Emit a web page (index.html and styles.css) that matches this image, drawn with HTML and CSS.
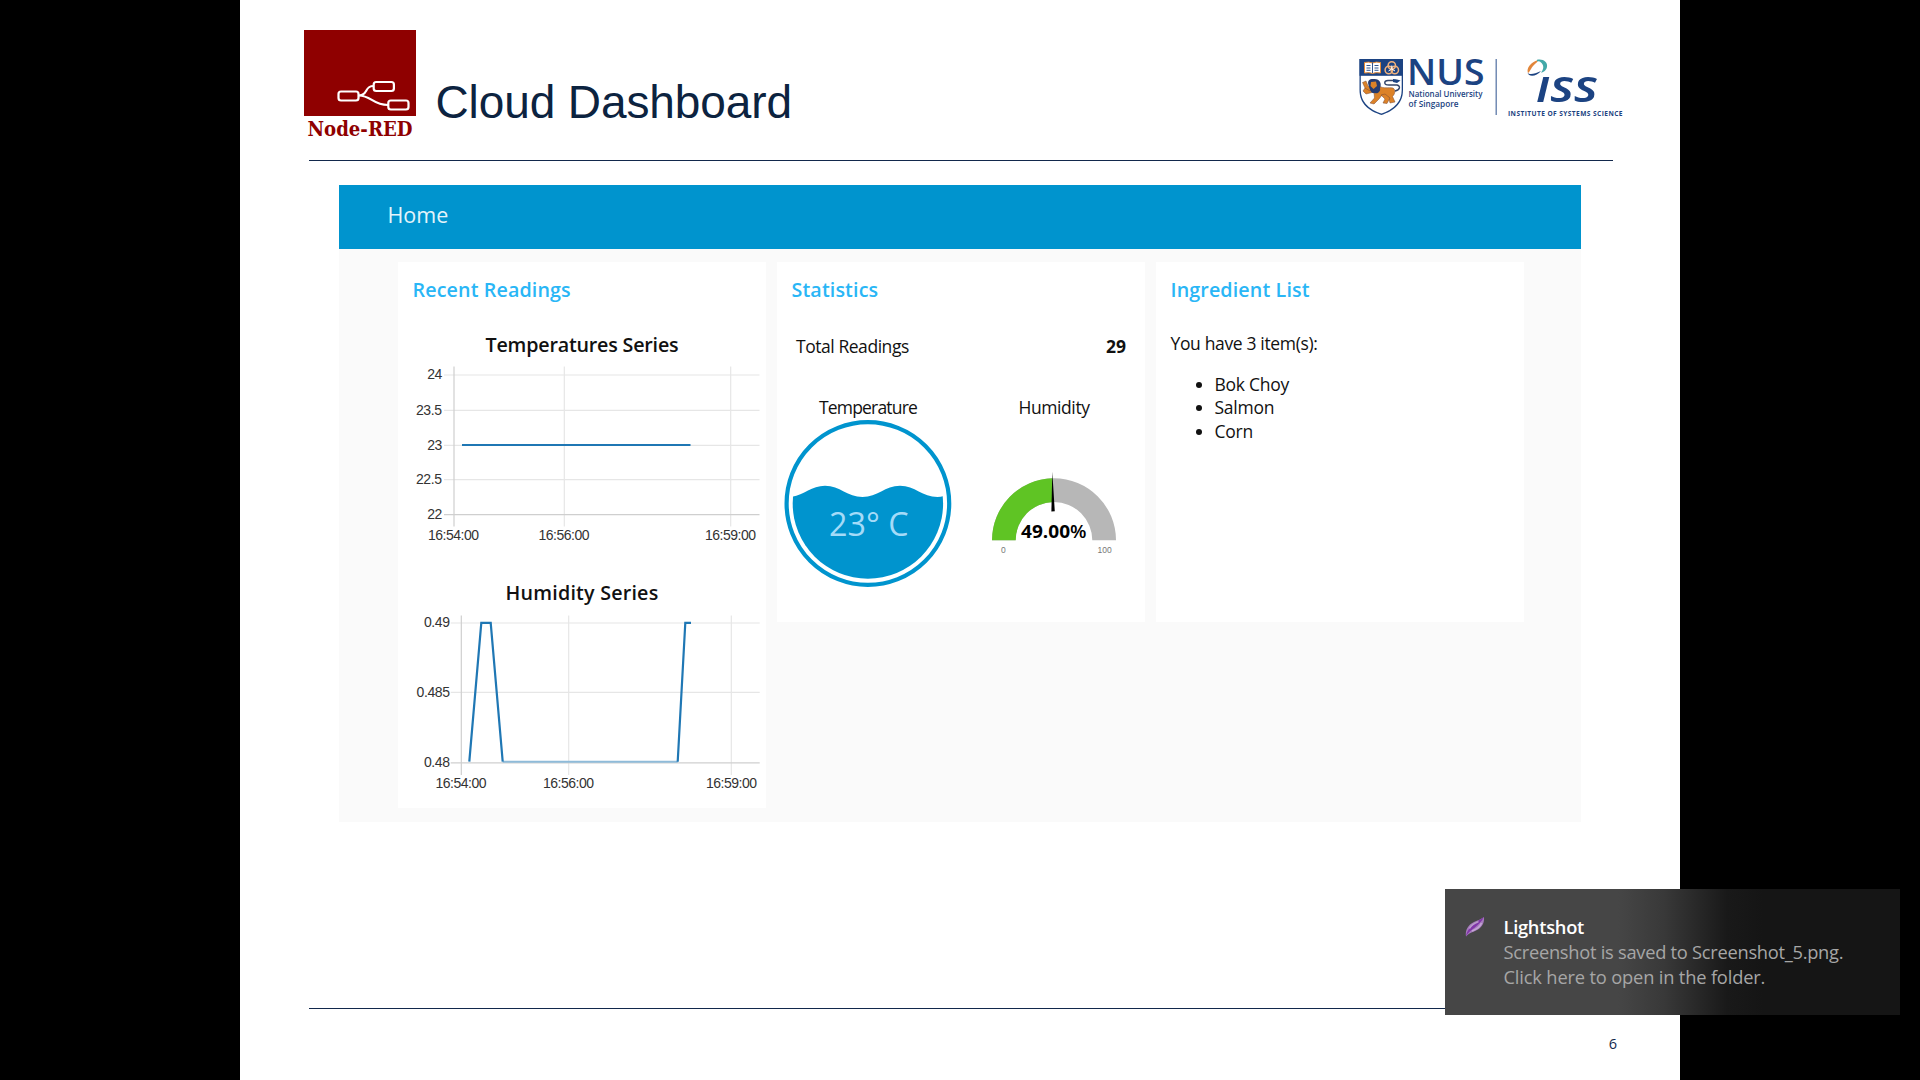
FILE: index.html
```html
<!DOCTYPE html>
<html lang="en">
<head>
<meta charset="utf-8">
<title>Cloud Dashboard</title>
<link rel="stylesheet" href="styles.css">
</head>
<body>
<main class="slide">
  <header class="slide-header">
    <svg class="nodered" viewBox="304 30 112 110" width="112" height="110">
      <rect x="304" y="30" width="112" height="86" fill="#8f0000"/>
      <g fill="none" stroke="#fff" stroke-width="2.2">
        <path d="M358.500 95.500C368.500 95.500 364 86 373.500 86M358.500 95.500C371.500 95.500 372.500 105 388 105"/>
        <rect x="338.500" y="91.500" width="20" height="9" rx="2.500" fill="#8f0000"/>
        <rect x="373.700" y="82" width="20.200" height="9" rx="2.500" fill="#8f0000"/>
        <rect x="388.300" y="100.500" width="20.200" height="9" rx="2.500" fill="#8f0000"/>
      </g>
      <text class="nodered-name" x="307.500" y="135.500" textLength="105" lengthAdjust="spacingAndGlyphs">Node-RED</text>
    </svg>
    <h1 class="title">Cloud Dashboard</h1>
    <svg class="nus" viewBox="1350 50 280 75" width="280" height="75">
      <defs><clipPath id="shield"><path d="M1359.500 59H1403V90C1403 104 1393 111 1381.500 115C1369 111 1359.500 104 1359.500 90Z"/></clipPath></defs>
      <g clip-path="url(#shield)">
        <rect x="1359" y="58" width="45" height="58" fill="#fff"/>
        <rect x="1359" y="58" width="45" height="17.800" fill="#1c4382"/>
        <path d="M1359.500 59H1403V90C1403 104 1393 111 1381.500 115C1369 111 1359.500 104 1359.500 90Z" fill="none" stroke="#1c4382" stroke-width="2.600"/>
      </g>
      <path d="M1364.500 62.500Q1369 61.500 1372.500 63Q1376 61.500 1380.500 62.500V73Q1376 72 1372.500 73.500Q1369 72 1364.500 73Z" fill="#fff" stroke="#e58a35" stroke-width="1"/>
      <path d="M1372.500 63V73M1366.500 65.500H1370.500M1366.500 68H1370.500M1366.500 70.300H1370.500M1374.500 65.500H1378.500M1374.500 68H1378.500M1374.500 70.300H1378.500" stroke="#1c4382" stroke-width=".9"/>
      <g fill="none" stroke="#f1b27c" stroke-width="1.500">
        <circle cx="1391.800" cy="65.500" r="3.700"/><circle cx="1388.800" cy="70" r="3.700"/><circle cx="1394.800" cy="70" r="3.700"/>
      </g>
      <path d="M1391.800 65.500V69L1388.500 71M1391.800 69L1395 71" stroke="#fff" stroke-width="1" fill="none"/>
      <g fill="#dc8228" stroke="#7b4b35" stroke-width=".5">
        <path d="M1371 86L1379 86C1384 89 1388 87 1393 88C1396 90 1395 94 1392.500 96.500L1395 102L1390 103L1388.500 97L1382 95L1379 99L1374 104L1370 103L1374.500 98L1374 92L1366 94L1363 91L1365 88L1371 89Z"/>
        <path d="M1385 94L1390 98L1387 103.500L1383 103L1385 99L1381 95Z"/>
        <path d="M1362.500 82.500L1366 81L1368 86L1372 88L1370 91L1365 88Z"/>
      </g>
      <path d="M1368.500 85C1367 80 1370 78.500 1374.500 79C1380 79 1382 84 1380 88C1381 92 1377 94 1375 93C1371 94 1370 90 1368.500 85Z" fill="#263c70"/>
      <path d="M1371 82L1376 81.500L1377 86L1373.500 89L1370.500 86Z" fill="#dc8228"/>
      <path d="M1395 91C1400 90 1401 86 1397 85H1389C1383 85 1384 80.500 1388 80.500H1396" fill="none" stroke="#34456a" stroke-width="1.400"/>
      <path d="M1393 79L1397 79.500L1400.500 80.500L1397 83L1393 82Z" fill="#1c4382"/>
      <text class="nus-name" x="1407" y="85.300" textLength="77.500" lengthAdjust="spacingAndGlyphs">NUS</text>
      <text class="nus-sub" x="1408.500" y="97.300" textLength="74" lengthAdjust="spacingAndGlyphs">National University</text>
      <text class="nus-sub" x="1408.500" y="107.300" textLength="50" lengthAdjust="spacingAndGlyphs">of Singapore</text>
      <path d="M1496.200 59V115" stroke="#5d79a8" stroke-width="1.300"/>
      <path d="M1538 60C1531 62 1526 68 1528 73C1530 72 1531 68 1533.500 65.500C1536 63 1538 62 1538 60Z" fill="#e2863a"/>
      <path d="M1537 59.800C1543 58.500 1548 62 1547 67C1546 71 1543 72.500 1541 72.500C1544 69 1544 65 1541 62.500C1540 61.300 1538.500 61 1537 61.500Z" fill="#43a9a8"/>
      <path d="M1527.500 72.500C1529 75 1534 74.500 1541 71C1537 76 1529 78 1527.500 72.500Z" fill="#1c4382"/>
      <text class="iss-name" x="1536" y="101.700" textLength="62" lengthAdjust="spacingAndGlyphs">ıss</text>
      <text class="iss-sub" x="1508" y="115.600" textLength="114.500">INSTITUTE OF SYSTEMS SCIENCE</text>
    </svg>
  </header>

  <section class="dashboard">
    <div class="toolbar">Home</div>
    <div class="cards">
      <article class="card tall">
        <h2>Recent Readings</h2>
        <h3 class="temp-title">Temperatures Series</h3>
        <svg class="chart" viewBox="398 366 368 204" width="368" height="204">
          <path class="grid" d="M444 375H759.500M444 410.300H759.500M444 445.300H759.500M444 479.700H759.500M564.300 366.500V526.500M730.700 366.500V526.500"/>
          <path class="axis" d="M454 366.500V526.500M444 514.700H759.500"/>
          <path class="series" d="M462 445H690.500"/>
          <g class="tick">
            <text x="427.300" y="379" textLength="15">24</text>
            <text x="416" y="415" textLength="26">23.5</text>
            <text x="427.300" y="450" textLength="15">23</text>
            <text x="416" y="484" textLength="26">22.5</text>
            <text x="427.300" y="519" textLength="15">22</text>
            <text x="428" y="540" textLength="51">16:54:00</text>
            <text x="538.500" y="540" textLength="51">16:56:00</text>
            <text x="705" y="540" textLength="51">16:59:00</text>
          </g>
        </svg>
        <h3 class="hum-title">Humidity Series</h3>
        <svg class="chart" viewBox="398 614 368 194" width="368" height="194">
          <path class="grid" d="M450.700 623H759.700M450.700 692.300H759.700M568.700 615.500V775M731.300 615.500V775"/>
          <path class="axis" d="M461.300 615.500V775M450.700 762.900H759.700"/>
          <path class="floor" d="M502.700 761.700H677.700"/>
          <path class="series" d="M469.300 761.700L481.300 622.800H490.700L502.700 761.700M677.700 761.700L685.300 622.800H691"/>
          <g class="tick">
            <text x="424" y="627" textLength="26">0.49</text>
            <text x="416.500" y="697" textLength="33.500">0.485</text>
            <text x="424" y="767" textLength="26">0.48</text>
            <text x="435.500" y="788" textLength="51">16:54:00</text>
            <text x="543" y="788" textLength="51">16:56:00</text>
            <text x="706" y="788" textLength="51">16:59:00</text>
          </g>
        </svg>
      </article>

      <article class="card">
        <h2>Statistics</h2>
        <div class="total"><span>Total Readings</span><strong>29</strong></div>
        <div class="gauges">
          <figure>
            <figcaption class="cap-temp">Temperature</figcaption>
            <svg viewBox="777 420 182 168" width="182" height="168">
              <defs><clipPath id="bowl"><circle cx="867.900" cy="503.500" r="75.200"/></clipPath></defs>
              <circle cx="867.900" cy="503.500" r="81.300" fill="none" stroke="#0094ce" stroke-width="4.200"/>
              <path clip-path="url(#bowl)" fill="#0094ce" d="M787.500 497C802.500 497 810 485.700 825 485.700S847.500 497 862.500 497S885 485.700 900 485.700S922.500 497 937.500 497Q943 497 950 494V590H787Z"/>
              <text class="liquid" x="829" y="536" textLength="79.500" lengthAdjust="spacingAndGlyphs">23° C</text>
            </svg>
          </figure>
          <figure>
            <figcaption class="cap-hum">Humidity</figcaption>
            <svg viewBox="963 420 182 168" width="182" height="168">
              <path fill="#b7b7b7" d="M992 540.300A62 62 0 0 1 1116 540.300H1092.300A38.300 38.300 0 0 0 1015.700 540.300Z"/>
              <path fill="#5fc424" d="M992 540.300A62 62 0 0 1 1052.300 478.300L1053 502A38.300 38.300 0 0 0 1015.700 540.300Z"/>
              <path fill="#000" d="M1052.300 472L1054.800 511.300L1051.400 511.600Z"/>
              <text class="percent" x="1021" y="538.300" textLength="65.500" lengthAdjust="spacingAndGlyphs">49.00<tspan class="unit">%</tspan></text>
              <text class="limit" x="1003.400" y="552.600">0</text>
              <text class="limit" x="1104.600" y="552.600">100</text>
            </svg>
          </figure>
        </div>
      </article>

      <article class="card">
        <h2>Ingredient List</h2>
        <p>You have 3 item(s):</p>
        <ul>
          <li>Bok Choy</li>
          <li>Salmon</li>
          <li>Corn</li>
        </ul>
      </article>
    </div>
  </section>

  <footer class="slide-footer">6</footer>
</main>

<aside class="toast">
  <svg viewBox="0 0 20 22" width="20" height="22">
    <path d="M1 20.500C0 14 3 9 9 6C13 4 16 3.500 19 1C19.500 7 17 11 13 13.500C9 16 5 16 1 20.500Z" fill="#a67bbd"/>
    <path d="M1 20.500C4 14 14 11 19 1C16 3.500 12 5 9 8C5 12 2 14 1 20.500Z" fill="#8136a8"/>
    <path d="M4.500 12.500C6.500 8.500 10 7 13.500 5.500" fill="none" stroke="#b99bc9" stroke-width="1.500"/>
    <path d="M7 15C11 13.500 15 11 16.500 7" fill="none" stroke="#c4a5d4" stroke-width="1.700"/>
  </svg>
  <div class="toast-body">
    <strong>Lightshot</strong>
    <span class="line-a">Screenshot is saved to Screenshot_5.png.</span>
    <span class="line-b">Click here to open in the folder.</span>
  </div>
</aside>
</body>
</html>
```

FILE: styles.css
```css
* { box-sizing: border-box; margin: 0; padding: 0; }

body {
  width: 1920px;
  height: 1080px;
  overflow: hidden;
  background: #000;
  font-family: "Open Sans", "Noto Sans", sans-serif;
  font-size: 17.5px;
  color: #111;
  display: flex;
  justify-content: center;
}

svg { display: block; flex: none; overflow: visible; }

.slide {
  width: 1440px;
  height: 1080px;
  background: #fff;
  display: flex;
  flex-direction: column;
  padding: 30px 67px 0 64px;
}

.slide-header {
  display: flex;
  align-items: flex-start;
  height: 131px;
  margin-right: -17px;
  background: linear-gradient(#12284c, #12284c) 5px 130px / 1304px 1px no-repeat;
}

.nodered-name { font: bold 21px "DejaVu Serif Condensed", "DejaVu Serif", serif; fill: #8f0000; }

.title {
  flex: 1;
  margin: 46px 0 0 19.500px;
  font: 400 46px/52px "Liberation Sans", Arial, sans-serif;
  letter-spacing: -0.1px;
  color: #0c2340;
}

.nus { margin-top: 20px; }
.nus text { fill: #1c4382; }
.nus-name { font: 600 36.500px "Open Sans", sans-serif; }
.nus-sub { font: 600 8.800px "Open Sans", sans-serif; }
.nus .iss-name { font: italic 600 46px "Open Sans", sans-serif; }
.nus .iss-sub { font: 700 6.600px "Open Sans", sans-serif; }

.dashboard {
  width: 1242px;
  height: 637px;
  margin: 24px 0 0 35px;
  background: #fafafa;
}

.toolbar {
  height: 64px;
  padding-left: 48.500px;
  background: #0094ce;
  color: #e4f4fb;
  font-size: 21.5px;
  line-height: 59px;
}

.cards {
  display: flex;
  align-items: flex-start;
  gap: 11px;
  padding: 13px 0 0 59px;
}

.card { width: 368px; height: 360px; background: #fff; }
.card.tall { height: 546px; }

h2 {
  height: 54px;
  padding-left: 14.500px;
  font-size: 19.700px;
  font-weight: 600;
  line-height: 56px;
  letter-spacing: 0.12px;
  color: #29b6f6;
}

h3 {
  font-size: 19.700px;
  font-weight: 600;
  line-height: 45px;
  height: 44px;
  text-align: center;
}
.temp-title { margin-top: 6px; letter-spacing: -0.2px; }
.hum-title { letter-spacing: 0.2px; }

.grid, .axis { fill: none; stroke: #e6e6e6; stroke-width: 1.2; }
.axis { stroke: #cfcfcf; }
.series { fill: none; stroke: #1f77b4; stroke-width: 2.2; }
.floor { fill: none; stroke: #8fbbd9; stroke-width: 2; }
.tick { font: 14px "Liberation Sans", Arial, sans-serif; fill: #333; }

.total {
  display: flex;
  justify-content: space-between;
  padding: 0 19px 0 19px;
  line-height: 60px;
  letter-spacing: -0.45px;
}
.total strong { letter-spacing: 0; }

.gauges { display: flex; gap: 4px; padding-top: 18px; }
figcaption { height: 26px; text-align: center; line-height: 27px; letter-spacing: -0.4px; }
.cap-temp { letter-spacing: -0.8px; }
.liquid { font-size: 32.500px; fill: #a4dbf8; }
.percent { font-size: 17.500px; font-weight: 700; }
.unit { font-weight: 600; }
.limit { font: 8.500px "Liberation Sans", Arial, sans-serif; fill: #777; text-anchor: middle; }

.card p { height: 53px; padding-left: 14.500px; line-height: 54px; letter-spacing: -0.35px; }
.card ul { margin-top: 3.600px; padding-left: 58.500px; }
.card li { line-height: 23.600px; letter-spacing: -0.25px; }

.slide-footer {
  width: 1309px;
  margin: 186px 0 0 4px;
  background: linear-gradient(#12284c, #12284c) 1px 0 / 1304px 1px no-repeat;
  font-size: 14.500px;
  line-height: 71px;
  text-align: right;
  color: #12284c;
}

.toast {
  position: absolute;
  left: 1445px;
  top: 889px;
  width: 455px;
  height: 126px;
  display: flex;
  padding: 27px 0 0 20px;
  background: linear-gradient(90deg, #464646 0, #464646 38%, #393939 48%, #191919 62%, #151515 70%);
  color: #a6a6a6;
}

.toast-body {
  display: flex;
  flex-direction: column;
  padding: 0 0 0 18.500px;
  margin-top: -2px;
  font-size: 18.300px;
  line-height: 25px;
  letter-spacing: -0.27px;
  white-space: nowrap;
}
.toast strong { color: #fff; font-weight: 600; }
.toast .line-b { letter-spacing: -0.17px; }
```
